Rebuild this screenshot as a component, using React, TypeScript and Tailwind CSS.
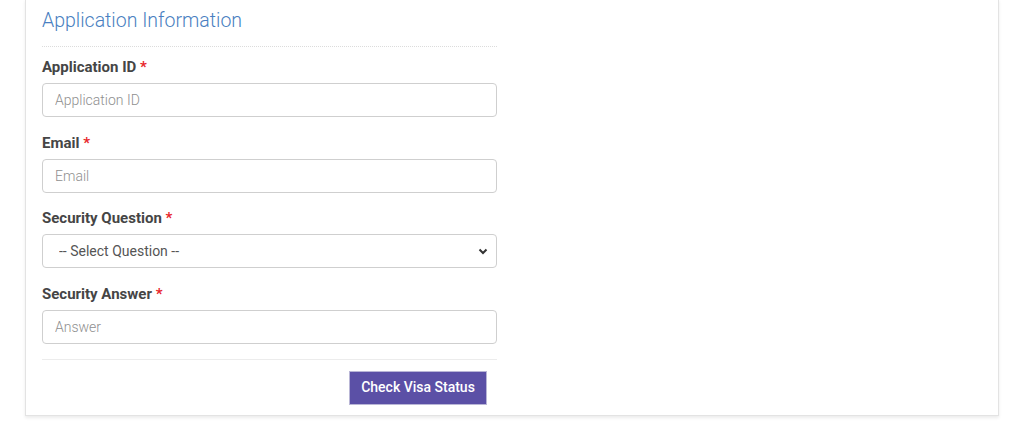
import React from 'react';

const fields = [
  { label: 'Application ID', placeholder: 'Application ID', type: 'input' },
  { label: 'Email', placeholder: 'Email', type: 'input' },
  { label: 'Security Question', placeholder: '-- Select Question --', type: 'select' },
  { label: 'Security Answer', placeholder: 'Answer', type: 'input' },
];

export default function App() {
  return (
    <div className="min-h-[430px] bg-white px-[25px] font-['Roboto',sans-serif]">
      <div className="-mt-px w-[974px] border border-[#e3e3e3] bg-white pb-[10px] pl-[16px] shadow-[0_2px_3px_rgba(0,0,0,0.08)]">
        <div className="w-[455px]">
          {/* Section heading */}
          <h2 className="pt-[7px] pb-[11px] text-[19.5px] font-light leading-[28px] text-[#4a7fc1]">
            Application Information
          </h2>
          <div className="border-t border-dotted border-[#dcdcdc]" />

          <div className="flex flex-col gap-[15.5px] pt-[10px]">
            {fields.map(field => (
              <div key={field.label} className="flex flex-col gap-[6px]">
                <label className="text-[15px] font-bold leading-[20px] text-[#454545]">
                  {field.label} <span className="text-[#e8272c]">*</span>
                </label>
                {field.type === 'select' ? (
                  <div className="relative">
                    <select className="h-[34px] w-full appearance-none rounded-[4px] border border-[#cfcfcf] bg-white px-[12px] pl-[16px] text-[14px] font-normal text-[#555]">
                      <option>{field.placeholder}</option>
                    </select>
                    <svg
                      className="pointer-events-none absolute right-[9px] top-[13px] h-[9px] w-[10px] text-[#333]"
                      viewBox="0 0 10 8"
                      fill="none"
                      stroke="currentColor"
                      strokeWidth="2"
                    >
                      <path d="M1.5 2l3.5 3.5L8.5 2" />
                    </svg>
                  </div>
                ) : (
                  <input
                    placeholder={field.placeholder}
                    className="h-[34px] w-full rounded-[4px] border border-[#cfcfcf] bg-white px-[12px] text-[14px] font-light text-[#555] placeholder:text-[#8f8f8f]"
                  />
                )}
              </div>
            ))}
          </div>

          <div className="mt-[15px] border-t border-[#ececec]" />

          <div className="flex justify-end pt-[11px] pr-[10px]">
            <button className="h-[34px] w-[138px] border border-[#b9b6d6] bg-[#5b50a6] text-[14px] font-medium text-white">
              Check Visa Status
            </button>
          </div>
        </div>
      </div>
    </div>
  );
}
